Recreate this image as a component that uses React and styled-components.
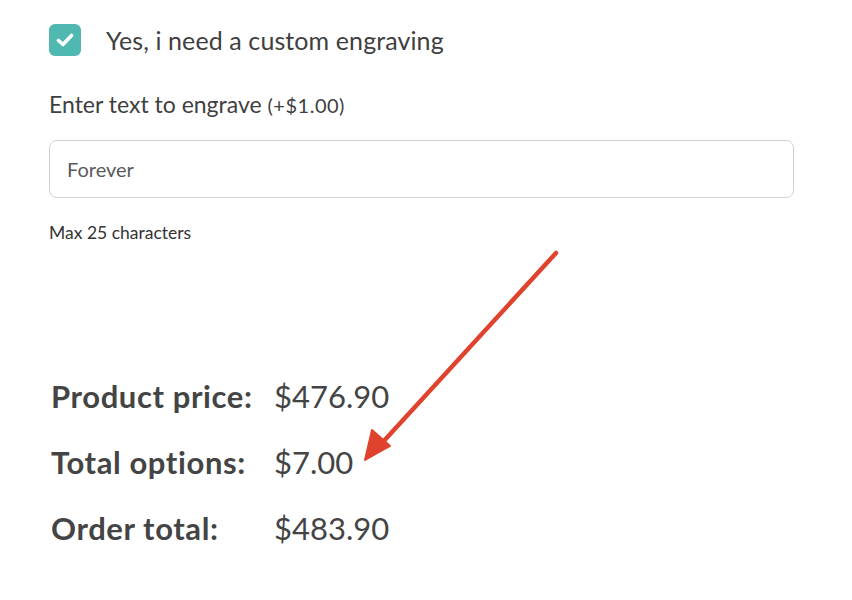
import React from "react";
import styled, { createGlobalStyle } from "styled-components";

const Global = createGlobalStyle`
  html, body { margin: 0; padding: 0; background: #fff; }
  body { font-family: "Lato", "Open Sans", sans-serif; color: #444; }
`;

const Page = styled.div`
  position: relative;
  width: 852px;
  height: 600px;
  padding: 24px 58px 0 49px;
  box-sizing: border-box;
`;

const CheckRow = styled.label`
  display: flex;
  align-items: center;
  gap: 25px;
`;

const Box = styled.span`
  width: 32px;
  height: 32px;
  border-radius: 6px;
  background: #4fb9b1;
  display: flex;
  align-items: center;
  justify-content: center;
`;

const CheckText = styled.span`
  font-size: 25px;
  color: #3f3f3f;
  letter-spacing: 0.1px;
`;

const Label = styled.div`
  margin-top: 34px;
  font-size: 23px;
  color: #3f3f3f;
  small { font-size: 20px; letter-spacing: 0.5px; }
`;

const Input = styled.div`
  margin-top: 22px;
  height: 58px;
  border: 1px solid #d2d2d2;
  border-radius: 8px;
  box-sizing: border-box;
  display: flex;
  align-items: center;
  padding-left: 17px;
  font-size: 20px;
  color: #5a5a5a;
`;

const Hint = styled.div`
  margin-top: 24px;
  font-size: 17.5px;
  color: #333;
`;

const Totals = styled.div`
  margin-top: 133px;
  margin-left: 2px;
  display: grid;
  grid-template-columns: 223px auto;
  row-gap: 25px;
  font-size: 31px;
  line-height: 41px;
`;

const TLabel = styled.div`
  font-weight: 700;
  color: #444;
  letter-spacing: 0.6px;
`;

const TValue = styled.div`
  color: #444;
`;

const Arrow = styled.svg`
  position: absolute;
  left: 0;
  top: 0;
  pointer-events: none;
`;

export default function App() {
  return (
    <>
      <Global />
      <Page>
        <CheckRow>
          <Box>
            <svg width="18" height="14" viewBox="0 0 18 14">
              <path d="M2.5 7.5 L7 11.5 L15.5 2.5" stroke="#fff" strokeWidth="3.6" fill="none" strokeLinecap="round" strokeLinejoin="round" />
            </svg>
          </Box>
          <CheckText>Yes, i need a custom engraving</CheckText>
        </CheckRow>
        <Label>Enter text to engrave <small>(+$1.00)</small></Label>
        <Input>Forever</Input>
        <Hint>Max 25 characters</Hint>
        <Totals>
          <TLabel>Product price:</TLabel>
          <TValue>$476.90</TValue>
          <TLabel>Total options:</TLabel>
          <TValue>$7.00</TValue>
          <TLabel>Order total:</TLabel>
          <TValue>$483.90</TValue>
        </Totals>
        <Arrow width="852" height="600" viewBox="0 0 852 600">
          <line x1="556" y1="253" x2="382" y2="443" stroke="#e0432d" strokeWidth="4.5" strokeLinecap="round" />
          <polygon points="365,460 372,430 390,446" fill="#e0432d" stroke="#e0432d" strokeWidth="2" strokeLinejoin="round" />
        </Arrow>
      </Page>
    </>
  );
}
